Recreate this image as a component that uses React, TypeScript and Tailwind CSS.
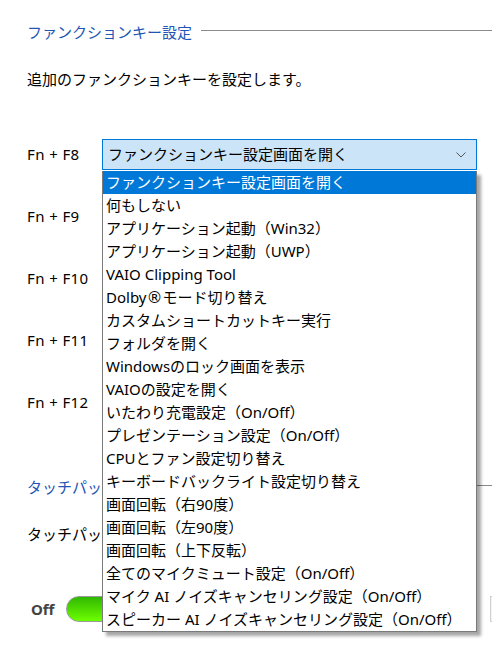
import React from "react";

const items: React.ReactNode[] = [
  "ファンクションキー設定画面を開く",
  "何もしない",
  "アプリケーション起動（Win32）",
  "アプリケーション起動（UWP）",
  "VAIO Clipping Tool",
  <>
    Dolby<span className="text-[16px]" style={{ fontFamily: '"DejaVu Sans", sans-serif' }}>®</span>モード切り替え
  </>,
  "カスタムショートカットキー実行",
  "フォルダを開く",
  "Windowsのロック画面を表示",
  "VAIOの設定を開く",
  "いたわり充電設定（On/Off）",
  "プレゼンテーション設定（On/Off）",
  "CPUとファン設定切り替え",
  "キーボードバックライト設定切り替え",
  "画面回転（右90度）",
  "画面回転（左90度）",
  "画面回転（上下反転）",
  "全てのマイクミュート設定（On/Off）",
  "マイク AI ノイズキャンセリング設定（On/Off）",
  "スピーカー AI ノイズキャンセリング設定（On/Off）",
];

const font = { fontFamily: '"Noto Sans", "Noto Sans CJK JP", sans-serif' };

function Chevron() {
  return (
    <svg width="10" height="6" viewBox="0 0 10 6" className="block">
      <path d="M0.5 0.5 L5 5 L9.5 0.5" fill="none" stroke="#555" strokeWidth="1" />
    </svg>
  );
}

function SelectBox({ active }: { active?: boolean }) {
  return (
    <div
      className={`flex-1 h-[31px] flex items-center justify-between pl-[5px] pr-[10px] border ${
        active ? "border-[#0078d7] bg-[#cce4f7]" : "border-[#7a7a7a] bg-white"
      }`}
    >
      <span className="text-[15px] leading-none text-black">ファンクションキー設定画面を開く</span>
      <Chevron />
    </div>
  );
}

export default function App() {
  return (
    <div className="relative w-[492px] h-[668px] overflow-hidden bg-white" style={font}>
      {/* header */}
      <div className="flex items-center pt-[22px] pl-[27px]">
        <span className="text-[15px] leading-[20px] text-[#2255b5]">ファンクションキー設定</span>
        <div className="flex-1 h-px bg-[#8a8a8a] ml-[9px] -mt-[3px]" />
      </div>
      <div className="pl-[27px] mt-[27px] text-[15px] leading-[20px] text-black">
        追加のファンクションキーを設定します。
      </div>

      {/* rows */}
      <div className="flex flex-col gap-[31px] mt-[50px] pl-[27px] pr-[15px]">
        {["Fn + F8", "Fn + F9", "Fn + F10", "Fn + F11", "Fn + F12"].map((l, i) => (
          <div key={l} className="flex items-center h-[31px]">
            <div className="w-[75px] text-[15px] leading-none text-black tracking-[0.4px]">{l}</div>
            <SelectBox active={i === 0} />
          </div>
        ))}
      </div>

      {/* touchpad section */}
      <div className="flex items-center mt-[59px] pl-[27px]">
        <span className="text-[15px] leading-[20px] text-[#2255b5]">タッチパッド設定</span>
        <div className="flex-1 h-px bg-[#8a8a8a] ml-[11px] -mt-[3px]" />
      </div>
      <div className="pl-[27px] mt-[27px] text-[15px] leading-[20px] text-black">
        タッチパッドを有効にする
      </div>
      <div className="flex items-center pl-[31px] mt-[52px] gap-[12px]">
        <span className="text-[15px] font-bold text-[#444444] leading-none" style={{ fontFamily: '"Noto Sans", sans-serif' }}>
          Off
        </span>
        <div className="w-[70px] h-[26px] rounded-full border border-[#9a9a9a] bg-gradient-to-b from-[#2fb800] to-[#6cff00]" />
        <div className="flex-1" />
        <div className="w-[10px] h-[26px] border border-[#d0d0d0] bg-[#f4f4f4] -mr-[8px]" />
      </div>

      {/* dropdown list overlay */}
      <div className="absolute left-[102px] top-[171px] w-[375px] border border-[#7a7a7a] border-t-0 bg-white shadow-[4px_4px_3px_rgba(0,0,0,0.35)]">
        {items.map((t, i) => (
          <div
            key={i}
            className={`h-[23px] flex items-center pl-[3px] text-[15px] leading-none whitespace-nowrap ${
              i === 0 ? "bg-[#0078d7] text-white" : "text-black"
            }`}
          >
            {t}
          </div>
        ))}
      </div>
    </div>
  );
}
